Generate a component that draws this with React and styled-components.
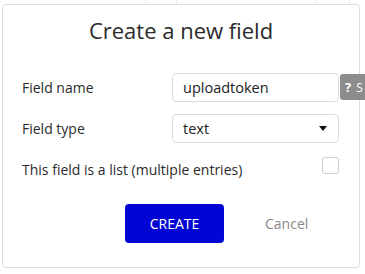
import React from "react";
import styled, { createGlobalStyle } from "styled-components";

const Global = createGlobalStyle`
  html, body { margin: 0; padding: 0; background: #fff; overflow: hidden; }
  body { font-family: "Open Sans", "Liberation Sans", sans-serif; color: #333; }
`;

const Page = styled.div`
  position: relative;
  width: 365px;
  height: 274px;
  padding: 4px 0 0 2px;
  box-sizing: border-box;
`;

const BgLine = styled.div`
  position: absolute;
  top: 0;
  width: 1px;
  height: 5px;
  background: #ececec;
`;

const Dialog = styled.div`
  width: 358px;
  height: 264px;
  box-sizing: border-box;
  border: 1px solid #dedede;
  border-radius: 4px;
  background: #fff;
  padding: 12px 20px 0 19px;
  display: flex;
  flex-direction: column;
  position: relative;
`;

const Title = styled.h1`
  margin: 0;
  font-weight: 400;
  font-size: 22px;
  line-height: 26px;
  color: #2b2b2b;
  text-align: center;
  padding-left: 1px;
`;

const Form = styled.div`
  margin-top: 30px;
  display: grid;
  grid-template-columns: 150px 167px;
  row-gap: 12px;
  align-items: center;
`;

const Label = styled.div`
  font-size: 14px;
  color: #2b2b2b;
`;

const FieldWrap = styled.div`
  position: relative;
  height: 29px;
`;

const Input = styled.div`
  box-sizing: border-box;
  height: 29px;
  border: 1px solid #dcdcdc;
  border-radius: 4px;
  padding: 0 11px 0 10px;
  display: flex;
  align-items: center;
  justify-content: space-between;
  font-size: 14.5px;
  color: #222;
`;

const HelpBadge = styled.div`
  position: absolute;
  left: 168px;
  top: 1px;
  height: 26px;
  width: 40px;
  background: #8c8c8c;
  border-radius: 3px 0 0 3px;
  color: #fff;
  font-size: 12px;
  display: flex;
  align-items: center;
  padding-left: 5px;
  gap: 5px;
  box-sizing: border-box;
  white-space: nowrap;
`;

const Q = styled.span`
  font-weight: 700;
  font-size: 13px;
`;

const ListRow = styled.div`
  margin-top: 14px;
  display: flex;
  align-items: flex-start;
  justify-content: space-between;
  height: 20px;
`;

const ListLabel = styled(Label)`
  padding-top: 3px;
`;

const Checkbox = styled.div`
  width: 17px;
  height: 17px;
  box-sizing: border-box;
  border: 1px solid #cfcfcf;
  border-radius: 3px;
`;

const Actions = styled.div`
  margin-top: 27px;
  display: flex;
  align-items: center;
  padding-left: 103px;
  gap: 41px;
`;

const CreateButton = styled.button`
  width: 99px;
  height: 39px;
  border: none;
  border-radius: 4px;
  background: #0205d3;
  color: #fff;
  font-family: inherit;
  font-size: 14px;
  padding: 0;
`;

const CancelButton = styled.button`
  border: none;
  background: none;
  padding: 0;
  font-family: inherit;
  font-size: 14px;
  color: #8a8a8a;
`;

const Caret = () => (
  <svg width="8" height="5" viewBox="0 0 8 5">
    <path d="M0 0 H8 L4 5 Z" fill="#111" />
  </svg>
);

export default function App() {
  return (
    <>
      <Global />
      <Page>
        <BgLine style={{ left: 145 }} />
        <BgLine style={{ left: 176 }} />
        <BgLine style={{ left: 315 }} />
        <BgLine style={{ left: 349 }} />
        <Dialog>
          <Title>Create a new field</Title>
          <Form>
            <Label>Field name</Label>
            <FieldWrap>
              <Input>uploadtoken</Input>
              <HelpBadge>
                <Q>?</Q>S
              </HelpBadge>
            </FieldWrap>
            <Label>Field type</Label>
            <FieldWrap>
              <Input>
                text
                <Caret />
              </Input>
            </FieldWrap>
          </Form>
          <ListRow>
            <ListLabel>This field is a list (multiple entries)</ListLabel>
            <Checkbox />
          </ListRow>
          <Actions>
            <CreateButton>CREATE</CreateButton>
            <CancelButton>Cancel</CancelButton>
          </Actions>
        </Dialog>
      </Page>
    </>
  );
}
